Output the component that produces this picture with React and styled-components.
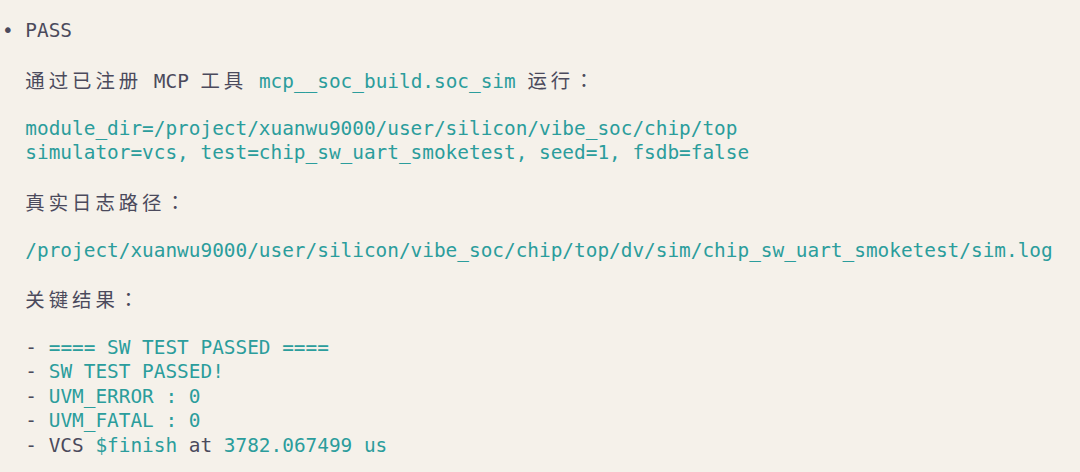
import * as React from "react";
import styled, { createGlobalStyle } from "styled-components";

const GlobalStyle = createGlobalStyle`
  html, body {
    margin: 0;
    padding: 0;
    background: #f5f1ea;
  }
`;

const Page = styled.div`
  width: 1080px;
  height: 472px;
  box-sizing: border-box;
  padding: 19px 0 0 2px;
  background: #f5f1ea;
  font-family: "DejaVu Sans Mono", "Noto Sans CJK SC", monospace;
  font-size: 19.4px;
  line-height: 24.4px;
  color: #4b4a5c;
  overflow: hidden;
`;

const Line = styled.div`
  white-space: pre;
  height: 24.4px;
  color: ${(p) => (p.$code ? "#2b9d9c" : "inherit")};
`;

const Code = styled.span`
  color: #2b9d9c;
`;

// CJK glyphs take two terminal cells
const Wide = styled.span`
  letter-spacing: 3.96px;
`;

// full-width colon drawn centred in its cell
const Colon = styled.span`
  font-family: "Noto Sans CJK TC", "Noto Sans CJK SC", sans-serif;
  letter-spacing: 3.96px;
`;

const Blank = () => <Line> </Line>;

export default function App() {
  return (
    <Page>
      <GlobalStyle />
      <Line>• PASS</Line>
      <Blank />
      <Line>
        {"  "}
        <Wide>通过已注册</Wide> MCP <Wide>工具</Wide>{" "}
        <Code>mcp__soc_build.soc_sim</Code> <Wide>运行</Wide>
        <Colon>：</Colon>
      </Line>
      <Blank />
      <Line $code>{"  module_dir=/project/xuanwu9000/user/silicon/vibe_soc/chip/top"}</Line>
      <Line $code>{"  simulator=vcs, test=chip_sw_uart_smoketest, seed=1, fsdb=false"}</Line>
      <Blank />
      <Line>
        {"  "}
        <Wide>真实日志路径</Wide>
        <Colon>：</Colon>
      </Line>
      <Blank />
      <Line $code>
        {"  /project/xuanwu9000/user/silicon/vibe_soc/chip/top/dv/sim/chip_sw_uart_smoketest/sim.log"}
      </Line>
      <Blank />
      <Line>
        {"  "}
        <Wide>关键结果</Wide>
        <Colon>：</Colon>
      </Line>
      <Blank />
      <Line>
        {"  - "}
        <Code>==== SW TEST PASSED ====</Code>
      </Line>
      <Line>
        {"  - "}
        <Code>SW TEST PASSED!</Code>
      </Line>
      <Line>
        {"  - "}
        <Code>UVM_ERROR : 0</Code>
      </Line>
      <Line>
        {"  - "}
        <Code>UVM_FATAL : 0</Code>
      </Line>
      <Line>
        {"  - VCS "}
        <Code>$finish</Code>
        {" at "}
        <Code>3782.067499 us</Code>
      </Line>
    </Page>
  );
}
